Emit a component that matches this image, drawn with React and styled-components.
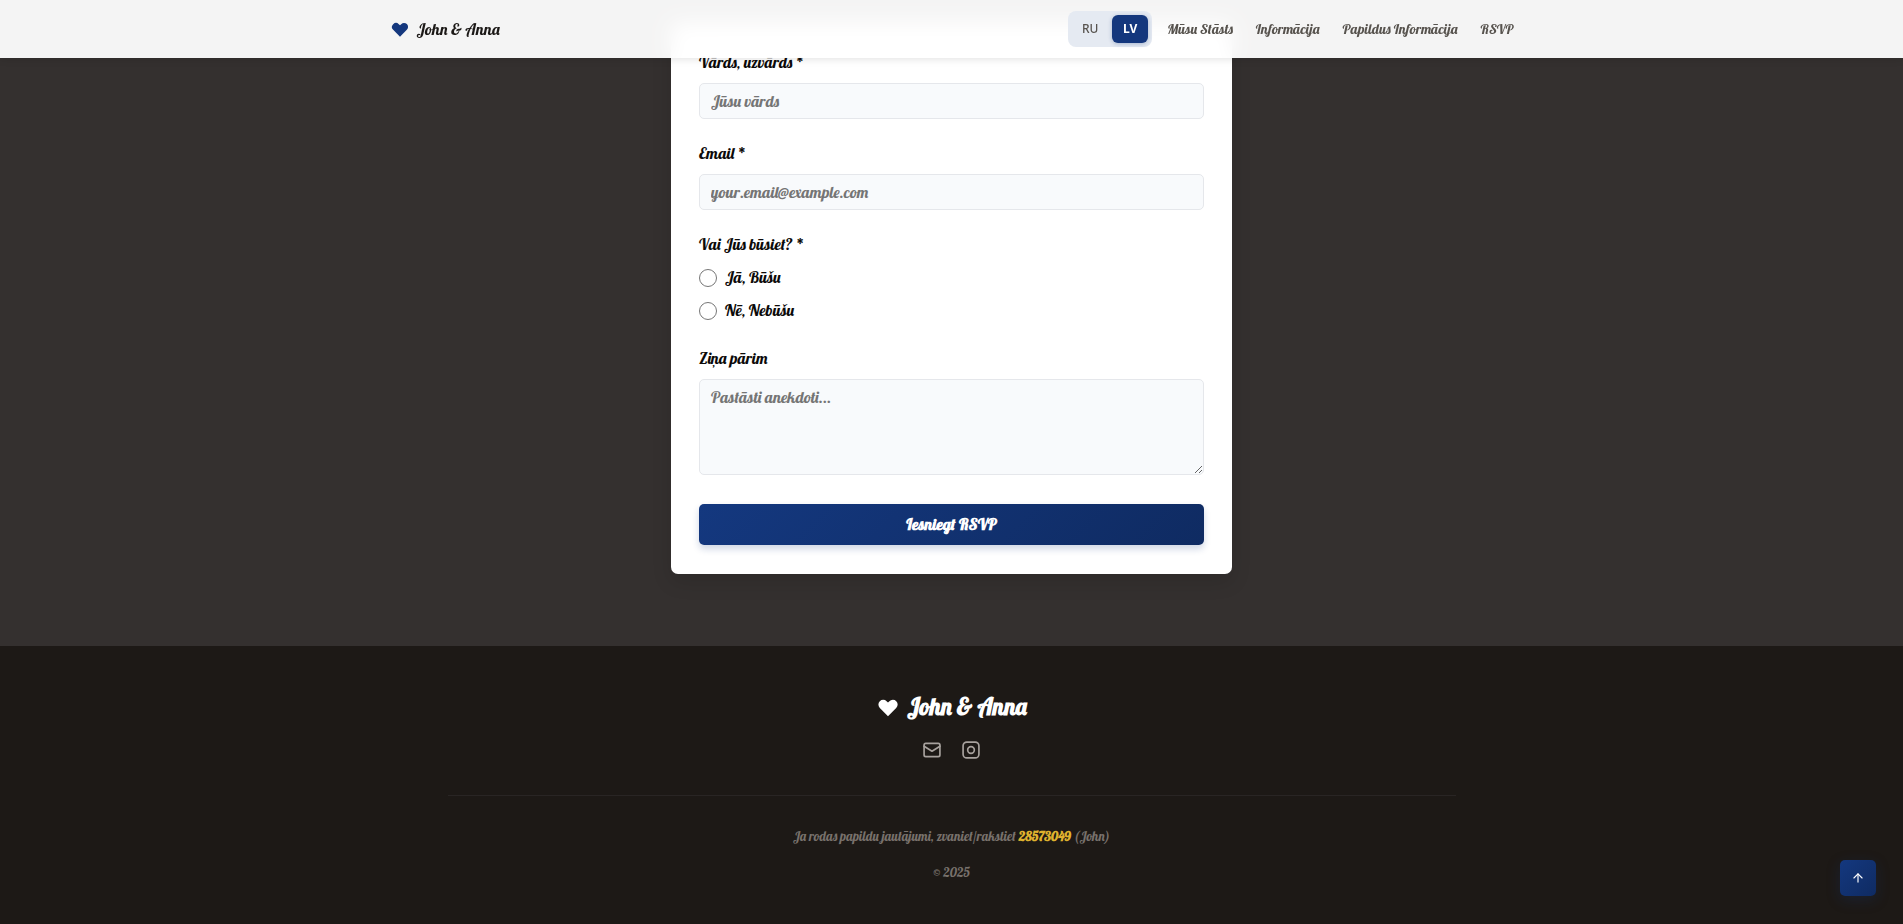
import React from "react";
import styled, { createGlobalStyle } from "styled-components";
import { ArrowUp } from "lucide-react";

const GlobalStyle = createGlobalStyle`
  *, *::before, *::after { box-sizing: border-box; }
  body {
    margin: 0;
    background: #34302f;
    color: #1c1917;
    font-family: Lobster, "Liberation Serif", serif;
    font-size: 16px;
    line-height: 23px;
  }
  a { text-decoration: none; }
  button, input, textarea { font: inherit; }
`;

const Header = styled.header`
  position: fixed;
  inset: 0 0 auto;
  z-index: 10;
  background: rgba(255, 255, 255, 0.95);
  backdrop-filter: blur(10px);
  box-shadow: 0 1px 8px rgba(0, 0, 0, 0.12);
`;

const HeaderInner = styled.div`
  max-width: 1124px;
  height: 58px;
  margin: 0 auto;
  display: flex;
  align-items: center;
  justify-content: space-between;
`;

const Brand = styled.a`
  display: inline-flex;
  align-items: center;
  gap: 7px;
  color: ${(p) => (p.$large ? "#ffffff" : "#1c1917")};
  font-size: ${(p) => (p.$large ? "23px" : "16px")};
  font-weight: ${(p) => (p.$large ? 700 : 400)};
  line-height: ${(p) => (p.$large ? "32px" : "23px")};
  svg { color: ${(p) => (p.$large ? "#ffffff" : "#14377d")}; }
`;

const HeaderEnd = styled.div`
  display: flex;
  align-items: center;
  gap: 15px;
`;

const Languages = styled.div`
  display: flex;
  gap: 4px;
  padding: 4px;
  border-radius: 8px;
  background: #e5eaf2;
`;

const LanguageButton = styled.button`
  width: 36px;
  height: 28px;
  padding: 0;
  border: 0;
  border-radius: 6px;
  background: ${(p) => (p.$active ? "#14377d" : "transparent")};
  color: ${(p) => (p.$active ? "#ffffff" : "#57534e")};
  box-shadow: ${(p) => (p.$active ? "0 1px 4px rgba(20, 55, 125, 0.3)" : "none")};
  font-family: "Noto Sans", sans-serif;
  font-size: 12px;
  line-height: 16px;
  font-weight: ${(p) => (p.$active ? 700 : 500)};
  cursor: pointer;
`;

const Nav = styled.nav`
  display: flex;
  gap: 23px;
`;

const NavLink = styled.a`
  color: #57534e;
  font-size: 14px;
`;

const RsvpSection = styled.section`
  padding: 23px 16px 72px;
`;

const Card = styled.form`
  max-width: 561px;
  margin: 0 auto;
  padding: 28px 28px 29px;
  display: flex;
  flex-direction: column;
  gap: 23px;
  border-radius: 7px;
  background: #ffffff;
  box-shadow: 0 8px 20px rgba(0, 0, 0, 0.12);
`;

const Field = styled.div`
  display: flex;
  flex-direction: column;
  gap: 9px;
`;

const Choices = styled.fieldset`
  min-width: 0;
  margin: 0;
  padding: 0;
  border: 0;
`;

const label = `
  padding: 0;
  color: #0c0a09;
  font-weight: 500;
`;
const Label = styled.label`${label}`;
const Legend = styled.legend`${label}`;

const Input = styled.input`
  width: 100%;
  height: 36px;
  padding: 0 11px;
  border: 1px solid #e5e7eb;
  border-radius: 5px;
  background: #f8fafc;
  color: #1c1917;
  outline: none;
  &::placeholder { color: #757575; opacity: 1; }
`;

const TextArea = styled(Input)`
  display: block;
  height: 96px;
  padding: 6px 11px;
  resize: vertical;
`;

const ChoiceList = styled.div`
  display: flex;
  flex-direction: column;
  gap: 10px;
  padding: 10px 0 2px;
`;

const Choice = styled.label`
  display: flex;
  align-items: center;
  gap: 8px;
  color: #0c0a09;
  font-weight: 500;
`;

const Radio = styled.input`
  width: 18px;
  height: 18px;
  margin: 0;
  accent-color: #14377d;
`;

const Submit = styled.button`
  height: 41px;
  margin-top: 6px;
  border: 0;
  border-radius: 5px;
  background: linear-gradient(135deg, #14387f, #0f2b62);
  box-shadow: 0 4px 7px rgba(20, 55, 125, 0.2);
  color: #ffffff;
  font-weight: 700;
  cursor: pointer;
`;

const Footer = styled.footer`
  padding: 45px 16px 42px;
  display: flex;
  flex-direction: column;
  align-items: center;
  background: #1d1916;
  color: #78716c;
  font-size: 13px;
  line-height: 24px;
`;

const Socials = styled.div`
  display: flex;
  gap: 19px;
  padding: 17px 0 35px;
  a { display: flex; color: #a8a29e; }
`;

const FooterNotes = styled.div`
  width: 100%;
  max-width: 1008px;
  padding-top: 28px;
  display: flex;
  flex-direction: column;
  align-items: center;
  gap: 12px;
  border-top: 1px solid #292524;
  p { margin: 0; }
`;

const Phone = styled.a`
  color: #dfb22e;
  font-weight: 700;
`;

const ScrollTop = styled.button`
  position: fixed;
  right: 27px;
  bottom: 28px;
  width: 36px;
  height: 36px;
  padding: 0;
  display: grid;
  place-items: center;
  border: 0;
  border-radius: 5px;
  background: linear-gradient(135deg, #14387f, #0f2b62);
  box-shadow: 0 4px 14px rgba(20, 55, 125, 0.25);
  color: #ffffff;
  cursor: pointer;
`;

const Heart = ({ size }) => (
  <svg width={size} height={size} viewBox="0 0 20 20" fill="currentColor" aria-hidden="true">
    <path d="M3.172 5.172a4 4 0 0 1 5.656 0L10 6.343l1.172-1.171a4 4 0 1 1 5.656 5.656L10 17.657l-6.828-6.829a4 4 0 0 1 0-5.656z" />
  </svg>
);

const MailIcon = () => (
  <svg width="20" height="20" viewBox="0 0 24 24" fill="none" stroke="currentColor" strokeWidth="2" strokeLinecap="round" strokeLinejoin="round" aria-hidden="true">
    <rect x="2.5" y="4" width="19" height="16" rx="2" />
    <path d="M2.5 7.5 12 13.500l9.500-6" />
  </svg>
);

const InstagramIcon = () => (
  <svg width="20" height="20" viewBox="0 0 24 24" fill="none" stroke="currentColor" strokeWidth="2" aria-hidden="true">
    <rect x="2.5" y="2.5" width="19" height="19" rx="4.5" />
    <circle cx="12" cy="12" r="4" />
  </svg>
);

export default function App() {
  return (
    <>
      <GlobalStyle />
      <Header>
        <HeaderInner>
          <Brand href="#top"><Heart size={20} />John &amp; Anna</Brand>
          <HeaderEnd>
            <Languages>
              <LanguageButton type="button">RU</LanguageButton>
              <LanguageButton type="button" $active>LV</LanguageButton>
            </Languages>
            <Nav>
              <NavLink href="#story">Mūsu Stāsts</NavLink>
              <NavLink href="#info">Informācija</NavLink>
              <NavLink href="#more">Papildus Informācija</NavLink>
              <NavLink href="#rsvp">RSVP</NavLink>
            </Nav>
          </HeaderEnd>
        </HeaderInner>
      </Header>

      <RsvpSection id="rsvp">
        <Card onSubmit={(e) => e.preventDefault()}>
          <Field>
            <Label htmlFor="name">Vārds, uzvārds *</Label>
            <Input id="name" type="text" placeholder="Jūsu vārds" />
          </Field>
          <Field>
            <Label htmlFor="email">Email *</Label>
            <Input id="email" type="email" placeholder="your.email@example.com" />
          </Field>
          <Choices>
            <Legend>Vai Jūs būsiet? *</Legend>
            <ChoiceList>
              <Choice><Radio type="radio" name="attending" value="yes" />Jā, Būšu</Choice>
              <Choice><Radio type="radio" name="attending" value="no" />Nē, Nebūšu</Choice>
            </ChoiceList>
          </Choices>
          <Field>
            <Label htmlFor="message">Ziņa pārim</Label>
            <TextArea as="textarea" id="message" placeholder="Pastāsti anekdoti..." />
          </Field>
          <Submit type="submit">Iesniegt RSVP</Submit>
        </Card>
      </RsvpSection>

      <Footer>
        <Brand href="#top" $large><Heart size={24} />John &amp; Anna</Brand>
        <Socials>
          <a href="#mail" aria-label="Email"><MailIcon /></a>
          <a href="#instagram" aria-label="Instagram"><InstagramIcon /></a>
        </Socials>
        <FooterNotes>
          <p>Ja rodas papildu jautājumi, zvaniet/rakstiet <Phone href="tel:28573049">28573049</Phone> (John)</p>
          <p>© 2025</p>
        </FooterNotes>
      </Footer>

      <ScrollTop type="button" aria-label="Scroll to top"><ArrowUp size={14} /></ScrollTop>
    </>
  );
}
